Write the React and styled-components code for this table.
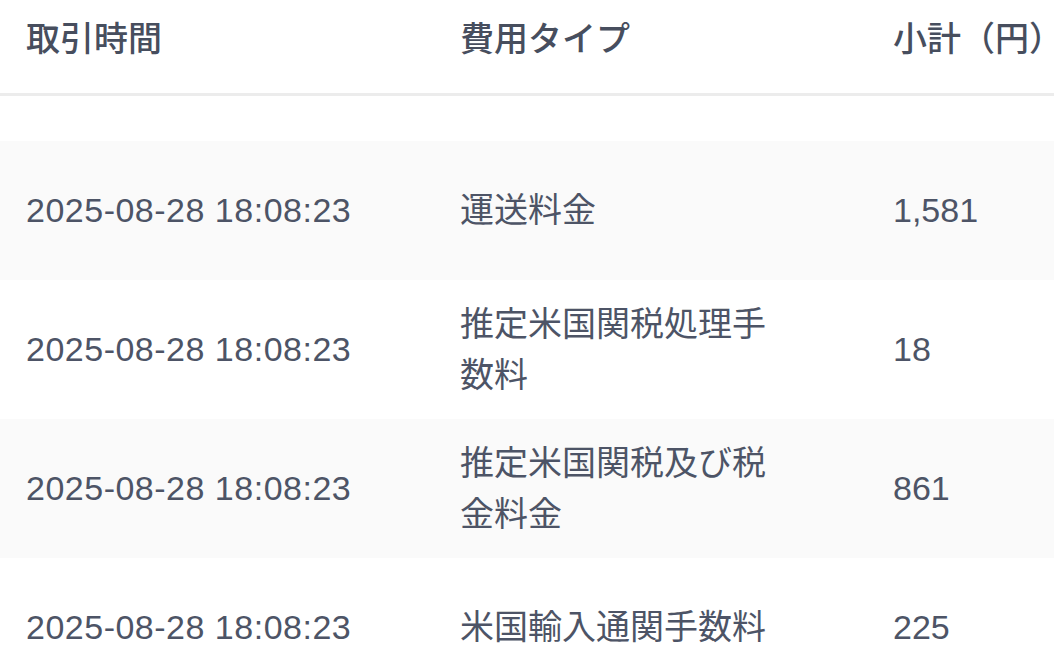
import React from "react";
import styled, { createGlobalStyle } from "styled-components";

const Global = createGlobalStyle`
  html, body { margin: 0; padding: 0; background: #ffffff; }
  body { overflow: hidden; }
`;

const Page = styled.div`
  width: 1054px;
  height: 672px;
  overflow: hidden;
  background: #ffffff;
  font-family: "Liberation Sans", "Noto Sans CJK JP", sans-serif;
  color: #4d5466;
`;

const Row = styled.div`
  display: grid;
  grid-template-columns: 434px 433px 1fr;
  align-items: center;
  background: ${(p) => (p.$striped ? "#fafafa" : "#ffffff")};
  height: ${(p) => (p.$head ? "auto" : "139px")};
`;

const HeadRow = styled(Row)`
  padding: 14px 0 28px;
  border-bottom: 3px solid #ececec;
`;

const Spacer = styled.div`
  height: 45px;
`;

const Cell = styled.div`
  padding-left: 26px;
  font-size: 34px;
  line-height: 51px;
  white-space: ${(p) => (p.$nowrap ? "nowrap" : "normal")};
  max-width: ${(p) => (p.$wrap ? "320px" : "none")};
  letter-spacing: ${(p) => (p.$spaced ? "0.5px" : "normal")};
`;

const HeadCell = styled(Cell)`
  font-weight: 500;
  color: #474e5e;
  white-space: nowrap;
`;

const rows = [
  { time: "2025-08-28 18:08:23", type: "運送料金", amount: "1,581" },
  { time: "2025-08-28 18:08:23", type: "推定米国関税処理手数料", amount: "18" },
  { time: "2025-08-28 18:08:23", type: "推定米国関税及び税金料金", amount: "861" },
  { time: "2025-08-28 18:08:23", type: "米国輸入通関手数料", amount: "225" },
];

export default function App() {
  return (
    <Page>
      <Global />
      <HeadRow $head>
        <HeadCell>取引時間</HeadCell>
        <HeadCell>費用タイプ</HeadCell>
        <HeadCell>小計（円）</HeadCell>
      </HeadRow>
      <Spacer />
      {rows.map((r, i) => (
        <Row key={i} $striped={i % 2 === 0}>
          <Cell $nowrap $spaced>{r.time}</Cell>
          <Cell $wrap>{r.type}</Cell>
          <Cell $nowrap>{r.amount}</Cell>
        </Row>
      ))}
    </Page>
  );
}
